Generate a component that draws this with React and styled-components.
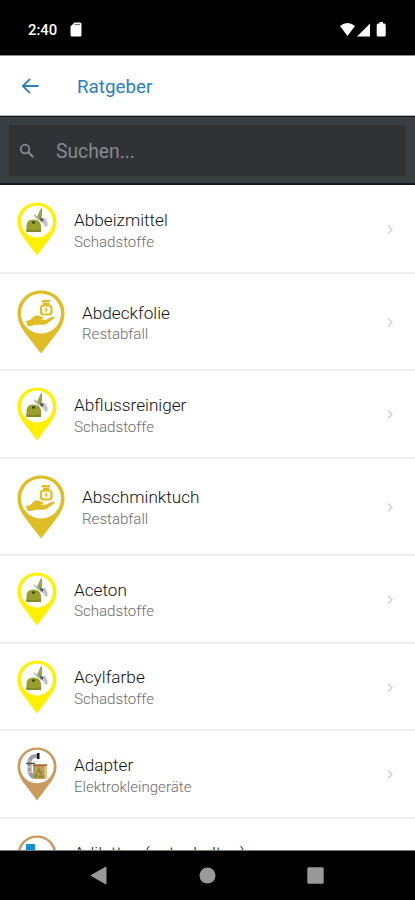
import React from 'react';
import styled, { createGlobalStyle } from 'styled-components';

const GlobalStyle = createGlobalStyle`
  * {
    box-sizing: border-box;
    margin: 0;
    padding: 0;
  }

  body {
    font-family: Roboto, 'Liberation Sans', sans-serif;
    background: #fff;
    overflow: hidden;
  }

  svg {
    display: block;
    flex-shrink: 0;
  }
`;

const Screen = styled.div`
  height: 900px;
  display: flex;
  flex-direction: column;
  background: #fff;
  overflow: hidden;
`;

const StatusBar = styled.div`
  height: 56px;
  flex-shrink: 0;
  display: flex;
  align-items: center;
  padding: 4px 28px 0;
  background: #000;
  color: #fff;
  border-bottom: 1px solid #8d8d8d;
`;

const Clock = styled.span`
  width: 42px;
  font-size: 14.8px;
  font-weight: 500;
  line-height: 20px;
`;

const StatusIcons = styled.div`
  display: flex;
  margin-left: auto;
`;

const Header = styled.header`
  height: 60px;
  flex-shrink: 0;
  display: flex;
  align-items: center;
  padding: 1px 21px 0;
  color: #2a80bd;
  border-bottom: 1px solid #b4b8b7;
`;

const Title = styled.h1`
  margin: 2px 0 0 38px;
  font-size: 18.8px;
  font-weight: 400;
  line-height: 24px;
`;

const SearchBar = styled.div`
  height: 69px;
  flex-shrink: 0;
  padding: 8px 9px 7px;
  background: #393e42;
  border-top: 1px solid #101b1e;
  border-bottom: 2px solid #141722;
`;

const SearchField = styled.div`
  height: 51px;
  display: flex;
  align-items: center;
  padding-left: 10px;
  background: #2f3336;
  color: #858b90;
`;

const Placeholder = styled.span`
  margin-left: 21px;
  padding-top: 2px;
  font-size: 19.3px;
  line-height: 26px;
`;

const List = styled.ul`
  flex: 1;
  min-height: 0;
  padding-top: 1.4px;
  list-style: none;
  overflow: hidden;
`;

const Row = styled.li`
  height: ${({ $large }) => ($large ? '97.3px' : '87.6px')};
  display: flex;
  align-items: center;
  padding: 0 20px 0 17px;
  border-bottom: 2px solid #f0f0f0;
`;

const Labels = styled.div`
  flex: 1;
  margin-left: 17px;
  padding-top: 5px;
  white-space: nowrap;
`;

const Name = styled.p`
  font-size: 17.2px;
  font-weight: 300;
  line-height: 21.6px;
  color: #111;
`;

const Category = styled.p`
  font-size: 15.1px;
  font-weight: 300;
  line-height: 21.6px;
  color: #6c6c6c;
`;

const NavBar = styled.nav`
  height: 50px;
  flex-shrink: 0;
  display: flex;
  align-items: center;
  justify-content: space-between;
  padding: 0 91px 0 90px;
  background: #000;
  border-top: 1px solid #777;
`;

const items = [
  { name: 'Abbeizmittel', category: 'Schadstoffe', type: 'hazard' },
  { name: 'Abdeckfolie', category: 'Restabfall', type: 'residual' },
  { name: 'Abflussreiniger', category: 'Schadstoffe', type: 'hazard' },
  { name: 'Abschminktuch', category: 'Restabfall', type: 'residual' },
  { name: 'Aceton', category: 'Schadstoffe', type: 'hazard' },
  { name: 'Acylfarbe', category: 'Schadstoffe', type: 'hazard' },
  { name: 'Adapter', category: 'Elektrokleingeräte', type: 'electro' },
  { name: 'Adiletten (gut erhalten)', type: 'clothes' },
];

const pinColors = {
  hazard: '#fff000',
  residual: '#dfbd25',
  electro: '#c99a5b',
  clothes: '#c99a5b',
};

const HazardArt = () => (
  <>
    <path d="M19.500 16l4.500-10 1 .5v8l-2.500 4z" fill="#96a647" />
    <path d="M17.500 12l4 4-1 1.500-3.500-3.500z" fill="#b3b7a8" />
    <path d="M24 15.500l4.500 1 2 4v4h-2.500l-2-3.500-3-1.500z" fill="#c0c3c6" />
    <path d="M23 15.500l3.500 1.500-.5 2.500-2.500-.5z" fill="#54575b" />
    <path d="M9.500 30v-6.500q.3-6 6.800-6 7.200 0 7.700 6V30z" fill="#9a9e2c" />
    <path d="M9.500 30v-3q4 1.500 7.500 1.200 4-.2 7-1.200v3z" fill="#83862a" />
    <circle cx="16.500" cy="20.500" r="1.300" fill="#292c12" />
  </>
);

const ElectroArt = () => (
  <>
    <path d="M20 9h-2q-5.500 1-5.500 7v7q.5 5.500 4.500 7" fill="none" stroke="#9a9fa3" strokeWidth="4" />
    <path d="M12 13l3 2M11 20h3M11 25h4" stroke="#d8dcdf" strokeWidth="1" />
    <path d="M20 6h2.500v6H20z" fill="#151719" />
    <path d="M9 16.500h9" stroke="#505358" strokeWidth="1.500" />
    <path d="M16 17.500h14V32H16z" fill="#c59a58" />
    <path d="M16 17.500h14v1.500H16z" fill="#a7612f" />
    <path d="M27.500 19H30v13h-2.500z" fill="#dfc58c" />
    <path d="M22 22.500l4 7h-8z" fill="none" stroke="#7d9128" strokeWidth="1.900" strokeDasharray="5.500 1.500" />
  </>
);

const ResidualArt = () => (
  <>
    <path d="M25 10h8v2.500h-8z" fill="#dfbd25" />
    <path d="M26 13h6v2h-6z" fill="#dfbd25" />
    <rect x="24" y="15.500" width="10.500" height="9" rx="2.500" fill="none" stroke="#dfbd25" strokeWidth="2.200" />
    <path d="M29.200 17.500v5M27.200 20h4" stroke="#dfbd25" strokeWidth="1.200" />
    <path
      d="M9 31l4-1 4.500-4q2-1.200 4.500-.3l4 1.300q1 1 0 1.800l-2.500.7 5.500.2 6-3q2-.7 2.500.3.200 1-1 2l-6 4.300q-2 1.500-5 1.500h-7l-3 1-5 .5z"
      fill="#dfbd25"
    />
  </>
);

const ClothesArt = () => (
  <>
    <path d="M9 9h9v10H9z" fill="#1590cf" />
    <path d="M18 16h9v9h-9z" fill="#2469a5" />
  </>
);

const Pin = ({ type }) => {
  const color = pinColors[type];

  if (type === 'residual') {
    return (
      <svg width="48" height="64" viewBox="0 0 48 64">
        <path d="M24 .5C11 .5.5 10.500.5 23c0 9 4 15 8 20.500L24 63.500 39.500 43.500c4-5.500 8-11.500 8-20.500C47.500 10.500 37 .5 24 .5z" fill={color} />
        <circle cx="24" cy="23.500" r="20" fill="#fff" />
        <ResidualArt />
      </svg>
    );
  }

  return (
    <svg width="40" height="54" viewBox="0 0 40 54">
      <path d="M20 .5C9 .5.5 9 .5 19.500c0 6.500 3 12 6 16L20 53.500l13.500-18c3-4 6-9.500 6-16C39.500 9 31 .5 20 .5z" fill={color} />
      <circle cx="20" cy="19.500" r={type === 'hazard' ? 16 : 16.8} fill="#fff" />
      {type === 'hazard' && <HazardArt />}
      {type === 'electro' && <ElectroArt />}
      {type === 'clothes' && <ClothesArt />}
    </svg>
  );
};

const App = () => {
  return (
    <>
      <GlobalStyle />
      <Screen>
        <StatusBar>
          <Clock>2:40</Clock>
          <svg width="12" height="15" viewBox="0 0 12 15">
            <path d="M4.500.5H10q1.500 0 1.500 1.500v11q0 1.500-1.500 1.500H2Q.5 14.500.5 13V4.500z" fill="#fff" />
            <path d="M4.500 2.500h5.500" stroke="#777" strokeWidth="1.200" />
          </svg>
          <StatusIcons>
            <svg width="48" height="16" viewBox="0 0 48 16">
              <path d="M1 4q7.500-6 15 0L8.500 14z" fill="#fff" />
              <path d="M18 14.500L31 1.500v13z" fill="#fff" />
              <path d="M40.500 0h3.500v1.500h1.200q1.500 0 1.500 1.500v10q0 1.500-1.500 1.500h-6q-1.500 0-1.500-1.500V3q0-1.500 1.500-1.500h1.300z" fill="#fff" />
            </svg>
          </StatusIcons>
        </StatusBar>

        <Header>
          <svg width="18" height="16" viewBox="0 0 18 16" fill="none" stroke="currentColor" strokeWidth="1.800">
            <path d="M17.500 8H2M9 .8L1.800 8 9 15.200" />
          </svg>
          <Title>Ratgeber</Title>
        </Header>

        <SearchBar>
          <SearchField>
            <svg width="16" height="16" viewBox="0 0 16 16" fill="none" stroke="currentColor">
              <circle cx="6" cy="6" r="4.300" strokeWidth="1.700" />
              <path d="M9.300 9.300l5 5" strokeWidth="2" />
            </svg>
            <Placeholder>Suchen...</Placeholder>
          </SearchField>
        </SearchBar>

        <List>
          {items.map((item) => (
            <Row key={item.name} $large={item.type === 'residual'}>
              <Pin type={item.type} />
              <Labels>
                <Name>{item.name}</Name>
                <Category>{item.category || '\u00a0'}</Category>
              </Labels>
              <svg width="10" height="12" viewBox="0 0 10 12" fill="none" stroke="#cecece" strokeWidth="1.300">
                <path d="M3 2.500l4 4-4 4" />
              </svg>
            </Row>
          ))}
        </List>

        <NavBar>
          <svg width="17" height="19" viewBox="0 0 17 19">
            <path d="M16 1v17L1 9.500z" fill="#999" stroke="#999" strokeLinejoin="round" />
          </svg>
          <svg width="17" height="17" viewBox="0 0 17 17">
            <circle cx="8.500" cy="8.500" r="8" fill="#999" />
          </svg>
          <svg width="17" height="17" viewBox="0 0 17 17">
            <rect x=".3" y=".3" width="16.400" height="16.400" rx="1.500" fill="#999" />
          </svg>
        </NavBar>
      </Screen>
    </>
  );
};

export default App;
